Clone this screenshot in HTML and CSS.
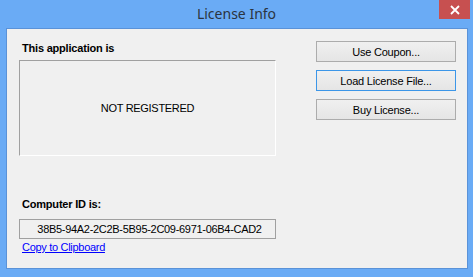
FILE: index.html
```html
<!DOCTYPE html>
<html lang="en">
<head>
  <meta charset="UTF-8" />
  <title>License Info</title>
  <link rel="stylesheet" href="styles.css">
</head>
<body>
  <div class="window">
    <div class="titlebar">
      <span class="title">License Info</span>
      <span class="close">
        <svg width="10" height="10" viewBox="0 0 10 10">
          <path d="M1 1 L9 9 M9 1 L1 9" stroke="#fff" stroke-width="1.8" />
        </svg>
      </span>
    </div>

    <div class="client">
      <div class="left">
        <div class="label">This application is</div>
        <div class="status">NOT REGISTERED</div>

        <div class="label id-label">Computer ID is:</div>
        <div class="id-box">38B5-94A2-2C2B-5B95-2C09-6971-06B4-CAD2</div>
        <a class="link" href="#">Copy to Clipboard</a>
      </div>

      <div class="right">
        <button class="btn">Use Coupon...</button>
        <button class="btn focused">Load License File...</button>
        <button class="btn">Buy License...</button>
      </div>
    </div>
  </div>
</body>
</html>
```

FILE: styles.css
```css
body {
  margin: 0;
  background: #6aabf5;
  font-family: 'Liberation Sans', Arial, sans-serif;
  font-size: 11px;
  letter-spacing: -0.3px;
  color: #000;
}
.window {
  width: 473px;
  height: 277px;
}
.titlebar {
  height: 28px;
  position: relative;
  display: flex;
  justify-content: center;
  align-items: center;
}
.title {
  font-family: 'Noto Sans', 'Open Sans', sans-serif;
  font-size: 14px;
  letter-spacing: 0;
  color: #2b3440;
  margin-top: -1px;
}
.close {
  position: absolute;
  top: 0;
  left: 439px;
  width: 31px;
  height: 19px;
  background: #c75050;
  display: flex;
  justify-content: center;
  align-items: center;
}
.client {
  margin-left: 6px;
  width: 462px;
  height: 241px;
  box-sizing: border-box;
  border: 1px solid #5a92d8;
  background: #f0f0f0;
  display: flex;
  gap: 40px;
  padding-left: 12px;
}
.left {
  width: 257px;
  padding-top: 13px;
  display: flex;
  flex-direction: column;
}
.label {
  font-weight: bold;
  line-height: 13px;
  padding-left: 3px;
  letter-spacing: -0.2px;
}
.status {
  margin-top: 5px;
  height: 96px;
  box-sizing: border-box;
  border-top: 1px solid #a0a0a0;
  border-left: 1px solid #a0a0a0;
  border-right: 1px solid #fff;
  border-bottom: 1px solid #fff;
  display: flex;
  justify-content: center;
  align-items: center;
  padding-bottom: 1px;
}
.id-label {
  margin-top: 42px;
}
.id-box {
  margin-top: 8px;
  height: 20px;
  box-sizing: border-box;
  border: 1px solid #a0a0a0;
  text-align: center;
  line-height: 18px;
  padding-left: 4px;
}
.link {
  color: #0000ff;
  line-height: 13px;
  margin-top: 2px;
  padding-left: 3px;
  align-self: flex-start;
}
.right {
  padding-top: 12px;
  display: flex;
  flex-direction: column;
  gap: 8px;
}
.btn {
  width: 140px;
  height: 21px;
  margin: 0;
  padding: 0;
  font-family: 'Liberation Sans', Arial, sans-serif;
  font-size: 11px;
  letter-spacing: -0.2px;
  color: #000;
  border: 1px solid #acacac;
  background: linear-gradient(#f0f0f0, #e5e5e5);
}
.btn.focused {
  border-color: #3c96e8;
}
```
